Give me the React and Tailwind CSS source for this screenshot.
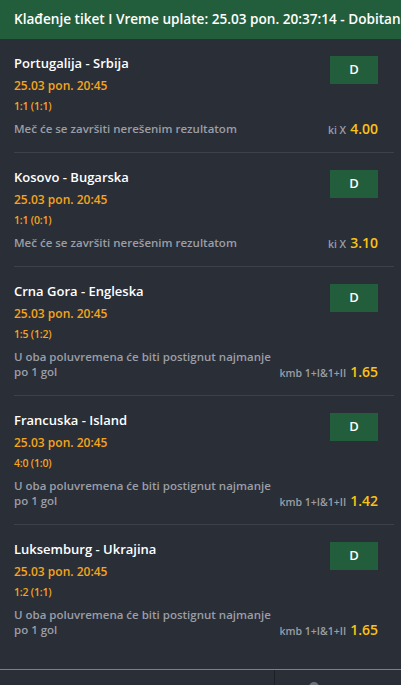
const bets = [
  {
    match: "Portugalija - Srbija",
    time: "25.03 pon. 20:45",
    score: "1:1 (1:1)",
    desc: "Meč će se završiti nerešenim rezultatom",
    market: "ki X",
    odds: "4.00",
  },
  {
    match: "Kosovo - Bugarska",
    time: "25.03 pon. 20:45",
    score: "1:1 (0:1)",
    desc: "Meč će se završiti nerešenim rezultatom",
    market: "ki X",
    odds: "3.10",
  },
  {
    match: "Crna Gora - Engleska",
    time: "25.03 pon. 20:45",
    score: "1:5 (1:2)",
    desc: "U oba poluvremena će biti postignut najmanje po 1 gol",
    market: "kmb 1+I&1+II",
    odds: "1.65",
  },
  {
    match: "Francuska - Island",
    time: "25.03 pon. 20:45",
    score: "4:0 (1:0)",
    desc: "U oba poluvremena će biti postignut najmanje po 1 gol",
    market: "kmb 1+I&1+II",
    odds: "1.42",
  },
  {
    match: "Luksemburg - Ukrajina",
    time: "25.03 pon. 20:45",
    score: "1:2 (1:1)",
    desc: "U oba poluvremena će biti postignut najmanje po 1 gol",
    market: "kmb 1+I&1+II",
    odds: "1.65",
  },
];

function BetRow({ bet, last }) {
  return (
    <div className={`pt-[14px] pb-[16px] pr-[16px] ${last ? "" : "border-b border-[#3d414b]"}`}>
      <div className="flex items-start justify-between">
        <div className="flex flex-col">
          <p className="text-[13px] leading-[20px] font-semibold text-white">{bet.match}</p>
          <p className="mt-[5px] text-[12px] leading-[16px] font-semibold text-[#f5a41c]">{bet.time}</p>
          <p className="mt-[4px] text-[10.5px] leading-[16px] font-semibold tracking-[-0.2px] text-[#f5a41c]">{bet.score}</p>
        </div>
        <button className="mt-[3px] flex h-[28px] w-[48px] items-center justify-center bg-[#235e3c] text-[13px] font-semibold text-white">
          D
        </button>
      </div>
      <div className="mt-[7px] flex items-end justify-between gap-[6px]">
        <p className="max-w-[262px] text-[11.5px] leading-[15px] font-semibold text-[#9a9ea6]">{bet.desc}</p>
        <div className="flex h-[15px] shrink-0 items-baseline gap-[4px] whitespace-nowrap leading-[15px]">
          <span className="text-[10.5px] font-semibold text-[#9a9ea6]">{bet.market}</span>
          <span className="text-[14px] font-semibold text-[#f9c315]">{bet.odds}</span>
        </div>
      </div>
    </div>
  );
}

export default function App() {
  return (
    <main className="min-h-screen bg-[#2a2e37] font-['Open_Sans',sans-serif]">
      <header className="flex h-[39px] items-center overflow-hidden whitespace-nowrap bg-[#235e3c] px-[14px] text-[13.6px] font-semibold text-white">
        Klađenje tiket I Vreme uplate: 25.03 pon. 20:37:14 - Dobitan
      </header>
      <section className="ml-[14px] mr-[7px]">
        {bets.map((bet, i) => (
          <BetRow key={bet.match} bet={bet} last={i === bets.length - 1} />
        ))}
      </section>
      <div className="mt-[16px] border-t border-[#3a8fe6]">
        <div className="grid h-[50px] grid-cols-[274px_1fr]">
          <div />
          <div className="border-l border-[#1d2027] pl-[34px] pt-[12px]">
            <div className="h-[10px] w-[10px] rounded-full bg-[#6b6f77]" />
          </div>
        </div>
      </div>
    </main>
  );
}
